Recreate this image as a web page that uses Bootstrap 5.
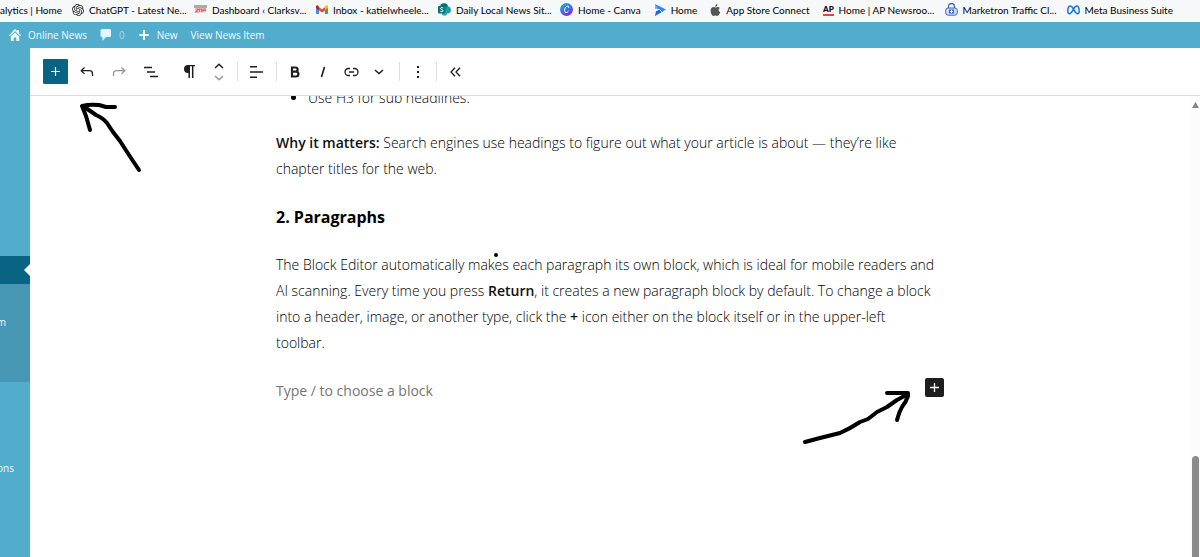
<!DOCTYPE html>
<html lang="en">
<head>
<meta charset="utf-8">
<meta name="viewport" content="width=device-width, initial-scale=1">
<title>Edit News Item</title>
<link href="https://cdn.jsdelivr.net/npm/bootstrap@5.3.0/dist/css/bootstrap.min.css" rel="stylesheet">
<style>
body{font-family:"Open Sans","Noto Sans",sans-serif;font-size:14px;line-height:26px;color:#1e1e1e;background:#fff}
svg{display:block;flex:none}
.bookmarks{height:22px;padding-bottom:3px;background:#f7f8f9;font-family:Lato,"Open Sans",sans-serif;font-size:10px;line-height:16px;column-gap:13px}
.bookmarks a{color:#000;gap:5px}
.bookmarks .wide{width:109px}
.bookmarks .first{width:59px}
.adminbar{height:26px;background:#52accc;font-size:10px;line-height:16px;padding-left:9px;gap:13px}
.adminbar a{gap:7px}
.adminbar a,.side a{color:#f0fbff}
.adminbar .dim{color:#a4dcee}
.side{width:30px;background:#52accc;font-size:10px;line-height:16px;padding-top:208px}
.side .current{height:28px;background:#096484}
.side .current::after{content:"";position:absolute;right:0;top:8px;border:6px solid transparent;border-right-color:#fff;border-left:0}
.side .submenu{height:98px;background:#4796b3;padding-top:30px}
.side .lower{padding-top:78px}
.tools{height:48px;border-bottom:1px solid #dcdcde;padding-left:13px}
.tools button{width:32px;height:26px;color:#1e1e1e;background:none}
.tools .inserter{width:25px;height:25px;background:#096484;color:#fff;border-radius:1px;margin-right:3px}
.tools .faint{color:#949494}
.tools .rule{width:1px;height:19px;background:#ddd}
.tools .slim{width:28px}
.tools .apart{margin-left:6px}
.canvas{min-height:0}
.column{max-width:668px}
.column p{margin-bottom:22px}
.column ul{margin-top:-11px;margin-bottom:19px}
.column h3{font-size:16px;line-height:26px;font-weight:700;margin-bottom:22px;color:#000}
.column p,.column li{font-weight:300;color:#000}
.column strong{font-weight:600;color:#111}
.column input{color:#757575;line-height:26px;background:none}
.column input::placeholder{color:#757575;opacity:1}
.column .add{width:19px;height:19px;background:#1e1e1e;color:#fff;border-radius:2px}
.scroller{width:10px;background:#fcfcfc;padding:6px 1px 0 2px}
.scroller .thumb{width:7px;height:101px;border-radius:4px 4px 0 0;background:#8b8b8b}
.ink{left:0;top:0;pointer-events:none}
</style>
</head>
<body class="vh-100 d-flex flex-column overflow-hidden position-relative">
<nav class="bookmarks d-flex align-items-center flex-shrink-0 text-nowrap" aria-label="Bookmarks">
  <a href="#" class="first d-flex text-decoration-none">alytics | Home</a>
  <a href="#" class="wide d-flex align-items-center text-decoration-none"><svg width="12" height="12" viewBox="0 0 24 24" fill="#222"><path d="M22.2819 9.8211a5.9847 5.9847 0 0 0-.5157-4.9108 6.0462 6.0462 0 0 0-6.5098-2.9A6.0651 6.0651 0 0 0 4.9807 4.1818a5.9847 5.9847 0 0 0-3.9977 2.9 6.0462 6.0462 0 0 0 .7427 7.0966 5.98 5.98 0 0 0 .511 4.9107 6.051 6.051 0 0 0 6.5146 2.9001A5.9847 5.9847 0 0 0 13.2599 24a6.0557 6.0557 0 0 0 5.7718-4.2058 5.9894 5.9894 0 0 0 3.9977-2.9001 6.0557 6.0557 0 0 0-.7475-7.0729zm-9.022 12.6081a4.4755 4.4755 0 0 1-2.8764-1.0408l.1419-.0804 4.7783-2.7582a.7948.7948 0 0 0 .3927-.6813v-6.7369l2.02 1.1686a.071.071 0 0 1 .038.052v5.5826a4.504 4.504 0 0 1-4.4945 4.4944zm-9.6607-4.1254a4.4708 4.4708 0 0 1-.5346-3.0137l.142.0852 4.783 2.7582a.7712.7712 0 0 0 .7806 0l5.8428-3.3685v2.3324a.0804.0804 0 0 1-.0332.0615L9.74 19.9502a4.4992 4.4992 0 0 1-6.1408-1.6464zM2.3408 7.8956a4.485 4.485 0 0 1 2.3655-1.9728V11.6a.7664.7664 0 0 0 .3879.6765l5.8144 3.3543-2.0201 1.1685a.0757.0757 0 0 1-.071 0l-4.8303-2.7865A4.504 4.504 0 0 1 2.3408 7.872zm16.5963 3.8558L13.1038 8.364 15.1192 7.2a.0757.0757 0 0 1 .071 0l4.8303 2.7913a4.4944 4.4944 0 0 1-.6765 8.1042v-5.6772a.79.79 0 0 0-.407-.667zm2.0107-3.0231l-.142-.0852-4.7735-2.7818a.7759.7759 0 0 0-.7854 0L9.409 9.2297V6.8974a.0662.0662 0 0 1 .0284-.0615l4.8303-2.7866a4.4992 4.4992 0 0 1 6.6802 4.66zM8.3065 12.863l-2.02-1.1638a.0804.0804 0 0 1-.038-.0567V6.0742a4.4992 4.4992 0 0 1 7.3757-3.4537l-.142.0805L8.704 5.459a.7948.7948 0 0 0-.3927.6813zm1.0976-2.3654l2.602-1.4998 2.6069 1.4998v2.9994l-2.5974 1.4997-2.6067-1.4997Z"/></svg>ChatGPT - Latest Ne...</a>
  <a href="#" class="wide d-flex align-items-center text-decoration-none"><svg width="13" height="12" viewBox="0 0 13 12"><path fill="#aaa" d="M0 1h13v3H0z"/><path fill="#eee3e3" d="M1 4h11v5H1z"/><path stroke="#d66" stroke-width="1.2" fill="none" d="M1.5 5h3l-3 3h3M5.5 8V5h2v3M9 8V5h2.5v1.5H9"/></svg>Dashboard ‹ Clarksv...</a>
  <a href="#" class="wide d-flex align-items-center text-decoration-none"><svg width="12" height="12" viewBox="0 0 12 12"><path fill="#4285f4" d="M0 3h3v7H1a1 1 0 0 1-1-1z"/><path fill="#34a853" d="M9 3h3v6a1 1 0 0 1-1 1H9z"/><path fill="#ea4335" d="m1 1.5 5 4 5-4L12 4 6 8.5 0 4V2.500z"/><path fill="#c5221f" d="M0 2.500a1.300 1.300 0 0 1 2-1L3 3v3.300L0 4z"/><path fill="#fbbc04" d="M12 2.500a1.300 1.300 0 0 0-2-1L9 3v3.300L12 4z"/></svg>Inbox - katielwheele...</a>
  <a href="#" class="wide d-flex align-items-center text-decoration-none"><svg width="13" height="13" viewBox="0 0 13 13"><circle cx="6" cy="4.500" r="4.300" fill="#036c70"/><circle cx="9.500" cy="7" r="3.400" fill="#1a9ba1"/><circle cx="6.500" cy="10" r="2.800" fill="#37a6a8"/><rect y="3" width="7.500" height="7.500" rx="1" fill="#03787c"/><path d="M5.200 5C3.800 4 2.300 4.800 2.600 5.800s2.500.8 2.500 1.900S3.500 9 2.300 8.200" stroke="#fff" fill="none"/></svg>Daily Local News Sit...</a>
  <a href="#" class="d-flex align-items-center text-decoration-none"><svg width="13" height="13" viewBox="0 0 13 13"><defs><linearGradient id="cv" x1="0" y1="0" x2=".6" y2="1"><stop stop-color="#16b7cc"/><stop offset=".5" stop-color="#3978df"/><stop offset="1" stop-color="#7d2ae8"/></linearGradient></defs><circle cx="6.500" cy="6.500" r="6.500" fill="url(#cv)"/><path d="M8.500 5c.9-2-1.300-2.500-2.700-1C4.200 5.700 4 9.500 6 9.600c1.200 0 2-.8 2.600-1.800" stroke="#fff" fill="none"/></svg>Home - Canva</a>
  <a href="#" class="d-flex align-items-center text-decoration-none"><svg width="12" height="12" viewBox="0 0 12 12"><path fill="#3b82e8" d="M1 0 12 5.500 8 8 5.500 5.500 3 5z"/><path fill="#67b3f7" d="m1 0 3 4.500L1 5z"/><path fill="#2468d4" d="m1 12 1-5 3.500-1.500L9 7.500z"/><path stroke="#fff" fill="none" stroke-width=".8" d="m2 6 3.500-.5L8 8"/></svg>Home</a>
  <a href="#" class="d-flex align-items-center text-decoration-none"><svg width="11" height="12" viewBox="0 0 11 12" fill="#555"><path d="M7.500 0C7.600 1.500 6.500 2.700 5.200 2.700 5.100 1.300 6.200.2 7.500 0zM9.800 4.100C8 5.100 8.200 7.500 10.200 8.300 9.600 10.100 8.500 12 7.300 11.900c-.8-.1-1-.5-1.900-.5s-1.200.5-1.900.5C2.300 12 .6 9.300.6 6.800c0-2.400 1.500-3.700 3-3.700.9 0 1.500.5 2 .5s1.200-.6 2.200-.6c.8 0 1.500.4 2 1.100z"/></svg>App Store Connect</a>
  <a href="#" class="wide d-flex align-items-center text-decoration-none"><svg width="11" height="12" viewBox="0 0 11 12"><text x="0" y="8" font-size="8" font-weight="800" fill="#111">AP</text><path fill="#f23b42" d="M0 10h11v2H0z"/></svg>Home | AP Newsroo...</a>
  <a href="#" class="wide d-flex align-items-center text-decoration-none"><svg width="13" height="13" viewBox="0 0 13 13"><path d="M3.500 6V3.500a3 3 0 0 1 6 0V6" stroke="#3d66b5" stroke-width="1.300" fill="none"/><rect x=".7" y="5" width="11.600" height="7.200" rx="2.500" fill="#cddcf5" stroke="#3d66b5"/><path d="M4 6.500h5v4H4z" fill="#3d66b5"/><path d="M6.500 7v3M5 8.500h3" stroke="#fff"/></svg>Marketron Traffic Cl...</a>
  <a href="#" class="d-flex align-items-center text-decoration-none"><svg width="13" height="12" viewBox="0 0 13 12"><path d="M6.500 5C5.300 3 4.400 2 3.400 2 1.800 2 .8 4.500.8 7c0 1.800.6 2.700 1.700 2.700C4.300 9.700 5.300 7 6.500 5s2-3 3.100-3c1.600 0 2.600 2.500 2.600 5 0 1.800-.6 2.700-1.700 2.700C8.700 9.700 7.700 7 6.500 5z" fill="none" stroke="#1877d8" stroke-width="1.500"/></svg>Meta Business Suite</a>
</nav>
<nav class="adminbar d-flex align-items-center flex-shrink-0 text-nowrap" aria-label="Site">
  <a href="#" class="d-flex align-items-center text-decoration-none"><svg width="12" height="12" viewBox="0 0 12 12" fill="currentColor"><path d="m6 0 2 2V1h2v3l2 2.200-1 .9-5-5-5 5-1-.9zM6 3.500l4.200 4.100V12H7.300V8.500H4.700V12H1.800V7.600z"/></svg>Online News</a>
  <a href="#" class="dim d-flex align-items-center text-decoration-none"><svg width="12" height="12" viewBox="0 0 12 12" fill="#e5f8ff"><path d="M2 0h7.500a1.500 1.500 0 0 1 1.500 1.500v5A1.500 1.500 0 0 1 9.500 8H6l-3.500 4V8H2A1.500 1.500 0 0 1 .5 6.500v-5A1.500 1.500 0 0 1 2 0z"/></svg>0</a>
  <a href="#" class="d-flex align-items-center text-decoration-none"><svg width="12" height="12" viewBox="0 0 12 12" stroke="currentColor" stroke-width="2"><path d="M6 1v10M1 6h10"/></svg>New</a>
  <a href="#" class="text-decoration-none">View News Item</a>
</nav>
<div class="d-flex flex-grow-1 overflow-hidden">
  <nav class="side flex-shrink-0 overflow-hidden" aria-label="Admin menu">
    <div class="current position-relative"></div>
    <div class="submenu"><a href="#" class="d-flex justify-content-end text-decoration-none pe-4">m</a></div>
    <div class="lower"><a href="#" class="d-flex justify-content-end text-decoration-none pe-3">ons</a></div>
  </nav>
  <div class="flex-grow-1 d-flex flex-column overflow-hidden">
    <div class="tools d-flex align-items-center flex-shrink-0" role="toolbar" aria-label="Document tools">
      <button class="inserter border-0 p-0 d-flex align-items-center justify-content-center" aria-label="Add block"><svg width="11" height="11" viewBox="0 0 11 11" stroke="currentColor" stroke-width="1.200"><path d="M5.500 1v9M1 5.500h9"/></svg></button>
      <button class="border-0 p-0 d-flex align-items-center justify-content-center" aria-label="Undo"><svg width="14" height="12" viewBox="0 0 14 12" fill="none" stroke="currentColor" stroke-width="1.300"><path d="M4.500 1.500 1.200 4.700l3.300 3.200M1.500 4.700h8q3 0 3 3V10"/></svg></button>
      <button class="faint border-0 p-0 d-flex align-items-center justify-content-center" aria-label="Redo"><svg width="14" height="12" viewBox="0 0 14 12" fill="none" stroke="currentColor" stroke-width="1.300"><path d="m9.500 1.500 3.300 3.200-3.300 3.200M12.500 4.700h-8q-3 0-3 3V10"/></svg></button>
      <button class="border-0 p-0 d-flex align-items-center justify-content-center" aria-label="Document overview"><svg width="16" height="12" viewBox="0 0 16 12" stroke="currentColor" stroke-width="1.400"><path d="M1 1.500h8M4 6h8M7 10.500h8"/></svg></button>
      <button class="apart border-0 p-0 d-flex align-items-center justify-content-center" aria-label="Paragraph"><svg width="12" height="13" viewBox="0 0 12 13"><path fill="currentColor" d="M5.500 0H12v1.200H5.500zM5 0h1.600v8H5A4 4 0 0 1 5 0z"/><path stroke="currentColor" stroke-width="1.500" d="M6.200 0v13M9.700 0v13"/></svg></button>
      <button class="slim border-0 p-0 d-flex align-items-center justify-content-center" aria-label="Move"><svg width="10" height="20" viewBox="0 0 10 20" fill="none" stroke-width="1.400"><path stroke="#1e1e1e" d="M1 6l4-3.800L9 6"/><path stroke="#949494" d="m1 14 4 3.800L9 14"/></svg></button>
      <span class="rule ms-1"></span>
      <button class="slim border-0 p-0 d-flex align-items-center justify-content-center ms-1" aria-label="Align"><svg width="14" height="14" viewBox="0 0 14 14" stroke="currentColor" stroke-width="1.400"><path d="M1 1.700h7M1 7h13M1 12.300h7"/></svg></button>
      <span class="rule apart"></span>
      <button class="slim border-0 p-0 d-flex align-items-center justify-content-center ms-1" aria-label="Bold"><svg width="10" height="12" viewBox="0 0 10 12" fill="none" stroke="currentColor" stroke-width="2.200"><path d="M2 1.500h3.500a2 2 0 0 1 0 4.200H2h4a2.300 2.300 0 0 1 0 4.800H2z"/></svg></button>
      <button class="slim border-0 p-0 d-flex align-items-center justify-content-center" aria-label="Italic"><svg width="8" height="12" viewBox="0 0 8 12" stroke="currentColor" stroke-width="1.600"><path d="M5.500 1 2.500 11"/></svg></button>
      <button class="slim border-0 p-0 d-flex align-items-center justify-content-center" aria-label="Link"><svg width="15" height="10" viewBox="0 0 15 10" fill="none" stroke="currentColor" stroke-width="1.300"><path d="M6 1.500H4.500a3.500 3.500 0 0 0 0 7H6M9 1.500h1.500a3.500 3.500 0 0 1 0 7H9M5 5h5"/></svg></button>
      <button class="slim border-0 p-0 d-flex align-items-center justify-content-center" aria-label="More"><svg width="10" height="6" viewBox="0 0 10 6" fill="none" stroke="currentColor" stroke-width="1.500"><path d="m1 1 4 3.500L9 1"/></svg></button>
      <span class="rule apart"></span>
      <button class="slim border-0 p-0 d-flex align-items-center justify-content-center ms-1" aria-label="Options"><svg width="4" height="12" viewBox="0 0 4 12" fill="currentColor"><path d="M1 0h2v2H1zM1 5h2v2H1zM1 10h2v2H1z"/></svg></button>
      <span class="rule ms-1"></span>
      <button class="slim border-0 p-0 d-flex align-items-center justify-content-center ms-1" aria-label="Collapse"><svg width="11" height="10" viewBox="0 0 11 10" fill="none" stroke="currentColor" stroke-width="1.300"><path d="M5 .8 1 5l4 4.200M10 .8 6 5l4 4.200"/></svg></button>
    </div>
    <div class="canvas flex-grow-1 d-flex overflow-hidden">
      <main class="flex-grow-1 overflow-hidden">
        <div class="column mx-auto">
          <ul class="ps-0 ms-3"><li class="ms-3">Use H3 for sub headlines.</li></ul>
          <p class="text-nowrap"><strong>Why it matters:</strong> Search engines use headings to figure out what your article is about — they’re like<br>chapter titles for the web.</p>
          <h3>2. Paragraphs</h3>
          <p class="text-nowrap">The Block Editor automatically makes each paragraph its own block, which is ideal for mobile readers and<br>AI scanning. Every time you press <strong>Return</strong>, it creates a new paragraph block by default. To change a block<br>into a header, image, or another type, click the <strong>+</strong> icon either on the block itself or in the upper-left<br>toolbar.</p>
          <div class="d-flex">
            <input class="border-0 p-0 flex-grow-1" type="text" aria-label="Block text" placeholder="Type / to choose a block">
            <button class="add border-0 p-0 d-flex align-items-center justify-content-center" aria-label="Add block here"><svg width="11" height="11" viewBox="0 0 11 11" stroke="currentColor" stroke-width="1.300"><path d="M5.500 1v9M1 5.500h9"/></svg></button>
          </div>
        </div>
      </main>
      <div class="scroller d-flex flex-column justify-content-between align-items-center flex-shrink-0" aria-hidden="true">
        <svg width="7" height="6" viewBox="0 0 7 6"><path d="M3.500 0 7 6H0z" fill="#858585"/></svg>
        <div class="thumb"></div>
      </div>
    </div>
  </div>
</div>
<svg class="ink position-absolute" width="1200" height="557" viewBox="0 0 1200 557" fill="none" stroke="#000" stroke-width="4" stroke-linecap="round" stroke-linejoin="round" aria-hidden="true">
  <path d="M139 170 129 155 120 141 113 132 107 123Q103 118 96 115L83 106M90 130 86 116 82 106Q90 104 99 105L106 107H115"/>
  <path d="M805 442 820 438 840 433Q851 428 860 422L868 419 877 412 887 407 897 400 908 394M887 393H908V396Q906 402 902 407 899 412 897 420"/>
  <circle cx="496" cy="255" r="2" fill="#000" stroke="none"/>
</svg>
<script src="https://cdn.jsdelivr.net/npm/bootstrap@5.3.0/dist/js/bootstrap.bundle.min.js"></script>
</body>
</html>
